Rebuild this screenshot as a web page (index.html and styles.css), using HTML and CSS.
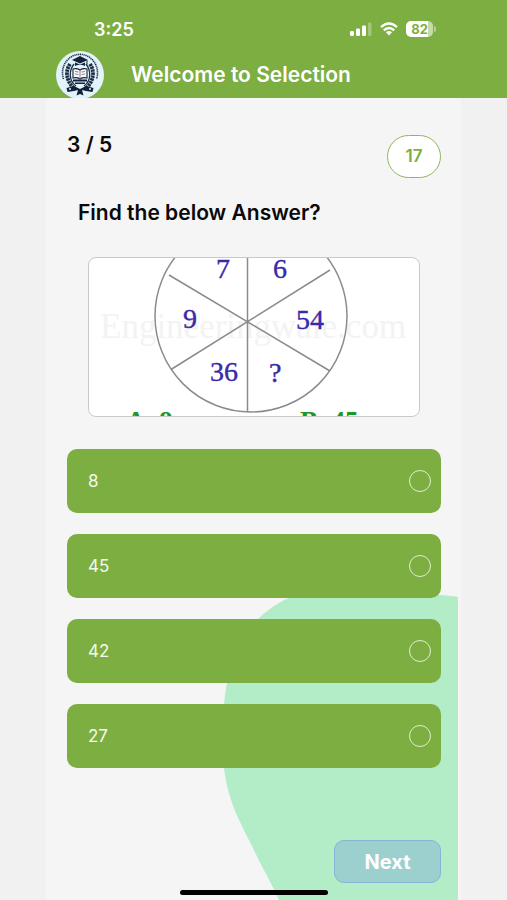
FILE: index.html
```html
<!DOCTYPE html>
<html lang="en">
<head>
<meta charset="utf-8">
<meta name="viewport" content="width=device-width, initial-scale=1">
<title>Welcome to Selection</title>
<link rel="stylesheet" href="styles.css">
</head>
<body>
<header class="top">
  <div class="status">
    <time class="clock">3:25</time>
    <div class="signals">
      <svg class="cell" viewBox="0 0 22 14" aria-hidden="true">
        <g fill="#fff"><rect x="0" y="9" width="4" height="5" rx="1.3"/><rect x="6" y="6.500" width="4" height="7.500" rx="1.3"/><rect x="12" y="3.500" width="4" height="10.500" rx="1.3"/><rect x="18" y="0.500" width="3.500" height="13.500" rx="1.3" opacity=".3"/></g>
      </svg>
      <svg class="wifi" viewBox="0 0 18 14" aria-hidden="true">
        <g fill="none" stroke="#fff" stroke-width="2.4"><path d="M1 5.200Q9-2.200 17 5.200"/><path d="M3.800 8.400Q9 3.400 14.200 8.400"/></g><path d="M9 13.500L5.900 10.300Q9 7.800 12.100 10.300Z" fill="#fff"/>
      </svg>
      <span class="battery"><span class="level">82</span></span>
    </div>
  </div>
  <div class="brand">
    <svg class="logo" viewBox="0 0 48 48" role="img" aria-label="Selection logo">
      <circle cx="24" cy="24" r="24" fill="#e2f3fb"/>
      <path d="M7.500 28A17.500 18.500 0 1 1 40.500 28" fill="none" stroke="#1d2c42" stroke-width="1.600" stroke-dasharray="1.200 .7"/>
      <g fill="none" stroke="#1d2c42">
        <path d="M14 13C9 20 10 31 19 38M34 13C39 20 38 31 29 38" stroke-width="3.800" stroke-dasharray="2.400 .6"/>
        <path d="M18 13C12.500 20 13 30 20 35M30 13C35.500 20 35 30 28 35" stroke-width="1.300"/>
      </g>
      <g fill="#142138">
        <path d="M16 9L24 5L32 9L24 12.500Z"/><path d="M19 11.500L24 13.500L29 11.500V15Q24 12.500 19 15Z"/><path d="M30.500 9.500H31.500V13.500H30.500Z"/>
        <path d="M10.500 37L18 35L24 38L30 35L37.500 37L36.500 41L30 40L26 39L27.500 44.500L24 43L20.500 44.500L22 39L18 40L11.500 41Z"/>
        <path d="M17 28.500H31V30.500H17ZM19 31.500H29V33H19Z"/>
      </g>
      <path d="M17 18Q21 17 24 19Q27 17 31 18V27Q27 26 24 28Q21 26 17 27Z" fill="#f7fbfc" stroke="#142138" stroke-width="1.100"/>
      <path d="M24 19V28M19 20.500L22.500 21M19 23L22.500 23.500M25.500 21L29 20.500M25.500 23.500L29 23" stroke="#76627b" stroke-width=".8"/>
      <circle cx="14" cy="38" r="1" fill="#e2f3fb"/><circle cx="34" cy="38" r="1" fill="#e2f3fb"/>
    </svg>
    <h1 class="title">Welcome to Selection</h1>
  </div>
</header>
<main class="sheet">
  <svg class="blob" viewBox="0 0 235 306" aria-hidden="true">
    <path d="M235 3C210-2 110-2 80 0C62 3 48 13 35 25C20 43 8 68 3 94C-1 120-1 150 1 174C5 207 16 226 29 252C38 272 49 290 56 306H235Z" fill="#b2edc8"/>
  </svg>
  <form class="quiz">
    <div class="progress">
      <p class="count">3 / 5</p>
      <p class="timer">17</p>
    </div>
    <h2 class="question">Find the below Answer?</h2>
    <div class="figure">
      <svg class="wheel" viewBox="1 1 330 158" role="img" aria-label="Number wheel puzzle">
        <text class="mark" x="12" y="81" font-size="35">Engineeringwale.com</text>
        <g fill="none" stroke="#8b8b8b" stroke-width="1.500">
          <circle cx="163" cy="59" r="96"/>
          <path d="M159.500 0V155M81 18L242 114M242 13L83 112.500"/>
        </g>
        <g class="num" font-size="28">
          <text x="128" y="21">7</text><text x="185" y="21">6</text>
          <text x="95" y="71">9</text><text x="208" y="72">54</text>
          <text x="122" y="124">36</text><text x="181" y="125">?</text>
        </g>
        <g class="choice" font-size="27">
          <text x="38" y="173">A. 8</text><text x="212" y="173">B. 45</text>
        </g>
      </svg>
    </div>
    <div class="options" role="radiogroup" aria-label="Answers">
      <label class="option"><span>8</span><input type="radio" name="answer"></label>
      <label class="option"><span>45</span><input type="radio" name="answer"></label>
      <label class="option"><span>42</span><input type="radio" name="answer"></label>
      <label class="option"><span>27</span><input type="radio" name="answer"></label>
    </div>
    <button class="next" type="button">Next</button>
  </form>
</main>
<div class="home"></div>
</body>
</html>
```
FILE: styles.css
```css
* { box-sizing: border-box; }
body {
  margin: 0;
  min-height: 100vh;
  display: flex;
  flex-direction: column;
  background: #f1f1f1;
  color: #090909;
  font-family: Inter, "Liberation Sans", sans-serif;
}
h1, h2, p { margin: 0; }
.top {
  background: #7dae41;
  color: #fff;
  height: 98px;
  padding: 17px 56px 0;
}
.status {
  display: flex;
  justify-content: space-between;
  align-items: center;
  height: 24px;
  padding: 0 18px 0 38px;
}
.clock { font-size: 18px; font-weight: 600; }
.signals { display: flex; align-items: center; gap: 8px; }
.cell { width: 22px; height: 14px; }
.wifi { width: 18px; height: 14px; }
.battery {
  display: block;
  position: relative;
  width: 27px;
  height: 16px;
  border-radius: 5px;
  background: linear-gradient(90deg, #fff 82%, #c5dba9 82%);
  color: #7dae41;
  font-size: 13px;
  font-weight: 700;
  line-height: 16px;
  text-align: center;
}
.battery::after {
  content: "";
  position: absolute;
  left: 28px;
  top: 5px;
  width: 2px;
  height: 6px;
  border-radius: 0 2px 2px 0;
  background: #b5d193;
}
.brand {
  display: flex;
  align-items: center;
  gap: 27px;
  margin-top: 10px;
}
.logo { width: 48px; height: 48px; flex: none; }
.title { font-size: 21px; font-weight: 600; line-height: 28px; }
.sheet {
  flex: 1;
  display: flex;
  position: relative;
  margin: 0 46px;
  padding: 37px 20px 17px 21px;
  background: #f5f5f5;
}
.blob {
  position: absolute;
  right: 3px;
  bottom: 0;
  width: 235px;
  height: 306px;
}
.quiz {
  position: relative;
  flex: 1;
  display: flex;
  flex-direction: column;
}
.progress {
  display: flex;
  justify-content: space-between;
  align-items: flex-start;
}
.count { font-size: 21px; font-weight: 600; line-height: 20px; }
.timer {
  width: 54px;
  height: 43px;
  border: 1px solid #8eb75b;
  border-radius: 22px;
  background: #fff;
  color: #7dae41;
  font-size: 17px;
  font-weight: 600;
  line-height: 41px;
  text-align: center;
}
.question {
  margin: 21px 11px 0;
  font-size: 21px;
  font-weight: 600;
  line-height: 28px;
}
.figure {
  margin: 30px 21px 0;
  border: 1px solid #c9c9c9;
  border-radius: 8px;
  background: #fff;
  overflow: hidden;
}
.wheel { display: block; width: 100%; }
.wheel text { font-family: "Liberation Serif", serif; }
.mark { fill: #f3f3f3; }
.num { fill: #3a2aa8; stroke: #3a2aa8; stroke-width: 0.4; }
.choice { fill: #189a24; font-weight: 700; }
.options {
  display: grid;
  gap: 21px;
  margin-top: 32px;
}
.option {
  display: flex;
  justify-content: space-between;
  align-items: center;
  height: 64px;
  padding: 0 10px 0 21px;
  border-radius: 10px;
  background: #7dae41;
  color: #f4f9ec;
  font-size: 17px;
}
.option input {
  appearance: none;
  width: 22px;
  height: 22px;
  margin: 0;
  border: 1px solid #e0edcf;
  border-radius: 50%;
}
.option input:checked { background: #e0edcf; }
.next {
  align-self: flex-end;
  width: 107px;
  height: 43px;
  margin-top: auto;
  border: 1px solid #86b3d6;
  border-radius: 10px;
  background: #9bd0cf;
  color: #fff;
  font: 700 20px Inter, "Liberation Sans", sans-serif;
}
.home {
  position: fixed;
  left: 50%;
  bottom: 5px;
  width: 148px;
  height: 5px;
  border-radius: 3px;
  background: #000;
  transform: translateX(-50%);
}
```
